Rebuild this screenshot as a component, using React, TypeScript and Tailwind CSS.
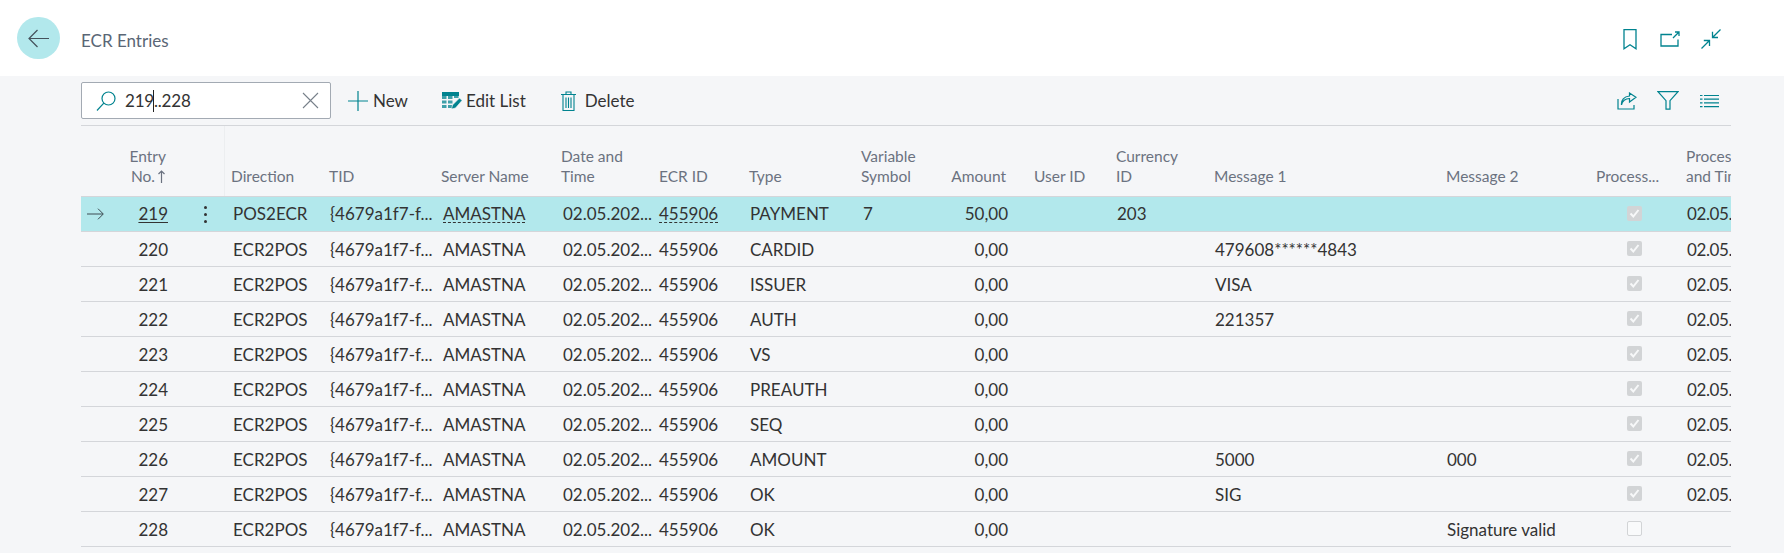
import React from 'react';

const font = "font-['Lato','Open_Sans',sans-serif]";

type Col = { label: string[]; w: string; right?: boolean; head: string; cell: string };

const cols: Col[] = [
  { label: ['Direction'], w: 'w-[97px]', head: 'pl-[6px]', cell: 'pl-[8px]' },
  { label: ['TID'], w: 'w-[113px]', head: 'pl-[7px]', cell: 'pl-[8px]' },
  { label: ['Server Name'], w: 'w-[120px]', head: 'pl-[6px]', cell: 'pl-[8px]' },
  { label: ['Date and', 'Time'], w: 'w-[97px]', head: 'pl-[6px]', cell: 'pl-[8px]' },
  { label: ['ECR ID'], w: 'w-[90px]', head: 'pl-[7px]', cell: 'pl-[7px]' },
  { label: ['Type'], w: 'w-[113px]', head: 'pl-[7px]', cell: 'pl-[8px]' },
  { label: ['Variable', 'Symbol'], w: 'w-[85px]', head: 'pl-[6px]', cell: 'pl-[8px]' },
  { label: ['Amount'], w: 'w-[87px]', right: true, head: 'pr-[21px]', cell: 'pr-[19px]' },
  { label: ['User ID'], w: 'w-[82px]', head: 'pl-[7px]', cell: 'pl-[8px]' },
  { label: ['Currency', 'ID'], w: 'w-[98px]', head: 'pl-[7px]', cell: 'pl-[8px]' },
  { label: ['Message 1'], w: 'w-[232px]', head: 'pl-[7px]', cell: 'pl-[8px]' },
  { label: ['Message 2'], w: 'w-[150px]', head: 'pl-[7px]', cell: 'pl-[8px]' },
  { label: ['Process...'], w: 'w-[91px]', head: 'pl-[7px]', cell: 'pl-[38px]' },
  { label: ['Process', 'and Time'], w: 'w-[51px]', head: 'pl-[6px]', cell: 'pl-[7px]' },
];

const ids = [219, 220, 221, 222, 223, 224, 225, 226, 227, 228];
const types = ['PAYMENT', 'CARDID', 'ISSUER', 'AUTH', 'VS', 'PREAUTH', 'SEQ', 'AMOUNT', 'OK', 'OK'];
const msg1: Record<number, string> = { 220: '479608******4843', 221: 'VISA', 222: '221357', 226: '5000', 227: 'SIG' };
const msg2: Record<number, string> = { 226: '000', 228: 'Signature valid' };

const CheckBox = ({ on }: { on: boolean }) =>
  on ? (
    <span className="mb-[2px] flex h-[15px] w-[15px] items-center justify-center rounded-[2px] bg-[#d2d4d6]">
      <svg width="11" height="11" viewBox="0 0 11 11" fill="none" stroke="#f7f8f9" strokeWidth="2">
        <path d="M1.5 5.5 4.3 8.5 9.5 2" />
      </svg>
    </span>
  ) : (
    <span className="mb-[2px] block h-[15px] w-[15px] rounded-[2px] border border-[#d2d4d6] bg-[#f9fafb]" />
  );

const Row = ({ id, active }: { id: number; active: boolean }) => {
  const values = [
    active ? 'POS2ECR' : 'ECR2POS',
    '{4679a1f7-f...',
    'AMASTNA',
    '02.05.202...',
    '455906',
    types[id - 219],
    active ? '7' : '',
    active ? '50,00' : '0,00',
    '',
    active ? '203' : '',
    msg1[id] ?? '',
    msg2[id] ?? '',
  ];
  return (
    <div className={`flex h-[35px] items-center border-b border-[#d4d6da] ${active ? 'bg-[#b2e8ec]' : 'pt-[1px]'}`}>
      <div className="flex w-[40px] pl-[6px] text-[#3d4a52]">
        {active && (
          <svg width="17" height="12" viewBox="0 0 17 12" fill="none" stroke="currentColor" strokeWidth="1">
            <path d="M0 6h16M11 .7 16.300 6 11 11.300" />
          </svg>
        )}
      </div>
      <div className="w-[51px] pr-[4px] text-right">
        <span className={active ? 'underline underline-offset-2' : ''}>{id}</span>
      </div>
      <div className="flex w-[53px] justify-end pr-[18px]">
        {active && (
          <span className="flex flex-col gap-[4px]">
            <i className="block h-[3px] w-[3px] rounded-full bg-[#333]" />
            <i className="block h-[3px] w-[3px] rounded-full bg-[#333]" />
            <i className="block h-[3px] w-[3px] rounded-full bg-[#333]" />
          </span>
        )}
      </div>
      {values.map((v, i) => {
        const dotted = active && (i === 2 || i === 4);
        return (
          <div key={i} className={`shrink-0 overflow-hidden whitespace-nowrap ${cols[i].w} ${cols[i].cell} ${cols[i].right ? 'text-right' : ''}`}>
            <span className={dotted ? 'underline decoration-dashed decoration-1 underline-offset-[2px]' : ''}>{v}</span>
          </div>
        );
      })}
      <div className={`shrink-0 ${cols[12].w} ${cols[12].cell}`}>
        <CheckBox on={id !== 228} />
      </div>
      <div className={`shrink-0 overflow-hidden whitespace-nowrap tracking-[-0.4px] ${cols[13].w} ${cols[13].cell}`}>
        {id !== 228 ? '02.05.2024' : ''}
      </div>
    </div>
  );
};

export default function App() {
  return (
    <div className={`${font} min-h-[553px] bg-[#f5f6f8] text-[17px] leading-[20px] text-[#333]`}>
      <header className="flex h-[76px] items-center bg-white pl-[17px] pr-[63px]">
        <button className="flex h-[42px] w-[43px] items-center justify-center rounded-full bg-[#b2e8ec] text-[#44515b]">
          <svg width="21" height="19" viewBox="0 0 21 19" fill="none" stroke="currentColor" strokeWidth="1.2">
            <path d="M21 9.500H1M9.500 1 1 9.500 9.500 18" />
          </svg>
        </button>
        <h1 className="ml-[21px] mt-[6px] text-[#5a6675]">ECR Entries</h1>
        <div className="ml-auto mt-[2px] flex items-center text-[#00838f]">
          <svg width="14" height="21" viewBox="0 0 14 21" fill="none" stroke="currentColor" strokeWidth="1.3">
            <path d="M1 .7h12v19l-6-4-6 4z" />
          </svg>
          <svg className="ml-[23px]" width="20" height="16" viewBox="0 0 20 16" fill="none" stroke="currentColor" strokeWidth="1.3">
            <path d="M12 3.500H1v11.500h17V8.500M13 7l6-6M15 1h4v4" />
          </svg>
          <svg className="ml-[21px]" width="20" height="20" viewBox="0 0 20 20" fill="none" stroke="currentColor" strokeWidth="1.3">
            <path d="M.5 19.500 8 12M2.800 11.500H8.500V17M19.500.5 12 8M11.500 2.800V8.500H17" />
          </svg>
        </div>
      </header>

      <main className="pl-[81px] pr-[53px]">
        <div className="flex h-[50px] items-start border-b border-[#d4d6da] pt-[6px]">
          <div className="flex h-[37px] w-[250px] items-center rounded-[2px] border border-[#a3aab3] bg-white pl-[14px] pr-[11px]">
            <svg width="20" height="20" viewBox="0 0 20 20" fill="none" stroke="#00838f" strokeWidth="1.2">
              <circle cx="12.500" cy="7.500" r="6.500" />
              <path d="M7.800 12.200 1 19.500" />
            </svg>
            <span className="relative ml-[9px] tracking-[-0.2px]">
              219..228
              <i className="absolute left-[28px] top-[-1px] block h-[22px] w-px bg-[#222]" />
            </span>
            <svg className="ml-auto" width="17" height="17" viewBox="0 0 17 17" fill="none" stroke="#77808a" strokeWidth="1.100">
              <path d="M1 1l15 15M16 1 1 16" />
            </svg>
          </div>
          <div className="ml-[17px] flex h-[37px] items-center">
            <svg width="20" height="20" viewBox="0 0 20 20" fill="none" stroke="#00838f" strokeWidth="1.200">
              <path d="M0 10h20M10 0v20" />
            </svg>
            <span className="ml-[5px]">New</span>
            <svg className="ml-[34px]" width="20" height="19" viewBox="0 0 20 19" fill="none">
              <path d="M0 1h17v4H0z" fill="#00838f" />
              <path d="M0 5h4.500v3H0zM6 5h4.500v3H6zM12 5h4.500v2H12zM0 9.500h4.500v3H0zM6 9.500h4.500v3H6zM0 14h4.500v3H0zM6 14h4v3H6z" fill="#00838f" fillOpacity=".75" />
              <path d="M9.500 18l1-4L17.500 7 20 9.500 13.500 17z" fill="#00838f" stroke="#f5f6f8" strokeWidth=".6" />
            </svg>
            <span className="ml-[4px]">Edit List</span>
            <svg className="ml-[35px]" width="15" height="20" viewBox="0 0 15 20" fill="none" stroke="#00838f" strokeWidth="1.100">
              <path d="M0 3.500h15M5 3.500V1h5v2.500M2 3.500v16h11v-16M5 6.500V17M7.500 6.500V17M10 6.500V17" />
            </svg>
            <span className="ml-[9px]">Delete</span>
          </div>
          <div className="ml-auto mr-[12px] flex h-[37px] items-center text-[#00838f]">
            <svg width="20" height="18" viewBox="0 0 20 18" fill="none" stroke="currentColor" strokeWidth="1.200">
              <path d="M1 7v10h16v-4M4.500 13c.5-4 4-6.500 8-6.500V10L19 5.200 12.500 1v3C7 4.500 4 8 4.500 13z" />
            </svg>
            <svg className="ml-[20px]" width="22" height="19" viewBox="0 0 22 19" fill="none" stroke="currentColor" strokeWidth="1.200">
              <path d="M1 .7h20l-8 9v8.500H9V9.700z" />
            </svg>
            <svg className="ml-[21px]" width="19" height="14" viewBox="0 0 19 14" fill="none" stroke="currentColor" strokeWidth="1.200">
              <path d="M0 1.500h2.500M4 1.500h15M0 5.200h2.500M4 5.200h15M0 8.900h2.500M4 8.900h15M0 12.600h2.500M4 12.600h15" />
            </svg>
          </div>
        </div>

        <div className="overflow-hidden">
          <div className="flex h-[71px] items-end border-b border-[#d4d6da] pb-[10px] text-[15.5px] text-[#6b7280]">
            <div className="w-[91px] shrink-0 pr-[4px] text-right">
              <div className="pr-[2px]">Entry</div>
              <div className="flex items-center justify-end pr-[3px]">
                No.
                <svg className="ml-[3px]" width="7" height="13" viewBox="0 0 7 13" fill="none" stroke="currentColor" strokeWidth="1.200">
                  <path d="M3.500 13V1M.5 4l3-3 3 3" />
                </svg>
              </div>
            </div>
            <div className="mb-[-10px] h-[70px] w-[53px] shrink-0 border-r border-[#eceef0]" />
            {cols.map(c => (
              <div key={c.label.join()} className={`shrink-0 whitespace-nowrap ${c.w} ${c.head} ${c.right ? 'text-right' : 'overflow-hidden'}`}>
                {c.label.map(l => (
                  <div key={l}>{l}</div>
                ))}
              </div>
            ))}
          </div>
          {ids.map(id => (
            <Row key={id} id={id} active={id === 219} />
          ))}
        </div>
      </main>
    </div>
  );
}
